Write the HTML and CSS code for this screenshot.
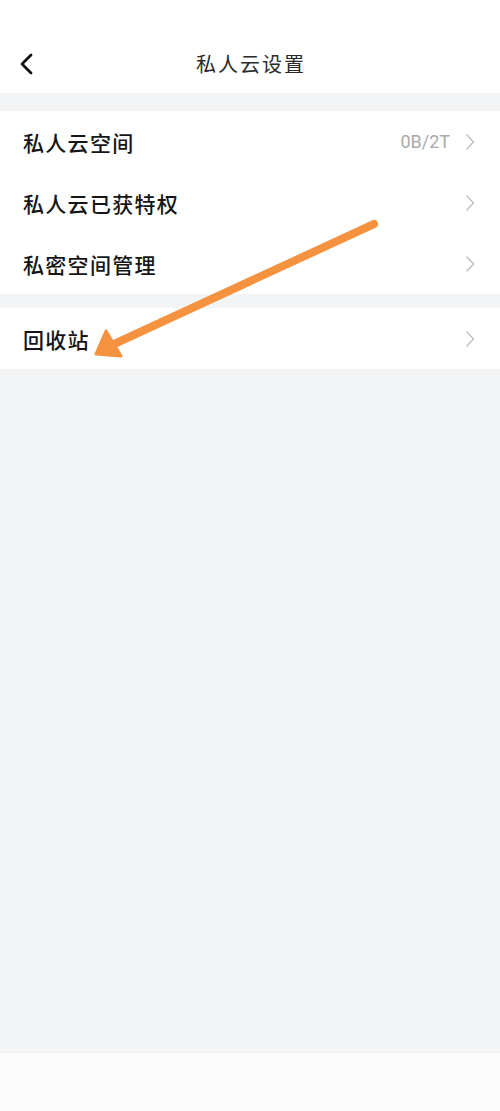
FILE: index.html
```html
<!DOCTYPE html>
<html lang="zh">
<head>
<meta charset="utf-8">
<link rel="stylesheet" href="styles.css">
</head>
<body>
<div class="page">
  <header class="topbar">
    <svg class="back" width="16" height="22" viewBox="0 0 16 22"><path d="M12 2 L3 11 L12 20" fill="none" stroke="#111" stroke-width="2.8" stroke-linecap="round" stroke-linejoin="round"/></svg>
    <div class="title">私人云设置</div>
  </header>
  <div class="gap gap-top"></div>
  <section class="group">
    <div class="row"><span class="label">私人云空间</span><span class="value">0B/2T</span><svg class="chev" width="10" height="18" viewBox="0 0 10 18"><path d="M1.5 1.5 L8.5 9 L1.5 16.5" fill="none" stroke="#c2c2c2" stroke-width="1.5"/></svg></div>
    <div class="row"><span class="label">私人云已获特权</span><svg class="chev" width="10" height="18" viewBox="0 0 10 18"><path d="M1.5 1.5 L8.5 9 L1.5 16.5" fill="none" stroke="#c2c2c2" stroke-width="1.5"/></svg></div>
    <div class="row"><span class="label">私密空间管理</span><svg class="chev" width="10" height="18" viewBox="0 0 10 18"><path d="M1.5 1.5 L8.5 9 L1.5 16.5" fill="none" stroke="#c2c2c2" stroke-width="1.5"/></svg></div>
  </section>
  <div class="gap gap-mid"></div>
  <section class="group">
    <div class="row"><span class="label">回收站</span><svg class="chev" width="10" height="18" viewBox="0 0 10 18"><path d="M1.5 1.5 L8.5 9 L1.5 16.5" fill="none" stroke="#c2c2c2" stroke-width="1.5"/></svg></div>
  </section>
  <div class="fill"></div>
  <footer class="bottom"></footer>
  <svg class="arrow" width="500" height="400" viewBox="0 0 500 400">
    <line x1="374" y1="224" x2="112" y2="345" stroke="#f5923f" stroke-width="8" stroke-linecap="round"/>
    <polygon points="96,354 106,331 121,356" fill="#f5923f" stroke="#f5923f" stroke-width="3" stroke-linejoin="round"/>
  </svg>
</div>
</body>
</html>
```
FILE: styles.css
```css
html, body {
  margin: 0;
  padding: 0;
}
body {
  font-family: "Noto Sans CJK SC", "Noto Sans", sans-serif;
  background: #f3f4f6;
}
.page {
  position: relative;
  width: 500px;
  height: 1111px;
  display: flex;
  flex-direction: column;
  overflow: hidden;
}
.topbar {
  height: 93px;
  background: #ffffff;
  display: flex;
  align-items: center;
  position: relative;
  padding-top: 0;
  box-sizing: border-box;
}
.back {
  position: absolute;
  left: 19px;
  top: 53px;
}
.title {
  width: 100%;
  text-align: center;
  font-size: 20px;
  letter-spacing: 2px;
  color: #2a2a2a;
  padding-top: 34px;
  padding-left: 2px;
}
.gap-top { height: 18px; }
.gap-mid { height: 14px; }
.group {
  background: #ffffff;
}
.row {
  height: 61px;
  display: flex;
  align-items: center;
  padding: 0 25px 0 23px;
}
.label {
  flex: 1;
  font-size: 21px;
  letter-spacing: 1.3px;
  font-weight: 500;
  color: #151515;
}
.value {
  font-family: Roboto, "Noto Sans", sans-serif;
  font-size: 18px;
  color: #a9a9a9;
  margin-right: 15px;
}
.chev {
  display: block;
}
.fill {
  flex: 1;
}
.bottom {
  height: 58px;
  background: #fcfcfc;
}
.arrow {
  position: absolute;
  left: 0;
  top: 0;
}
```
